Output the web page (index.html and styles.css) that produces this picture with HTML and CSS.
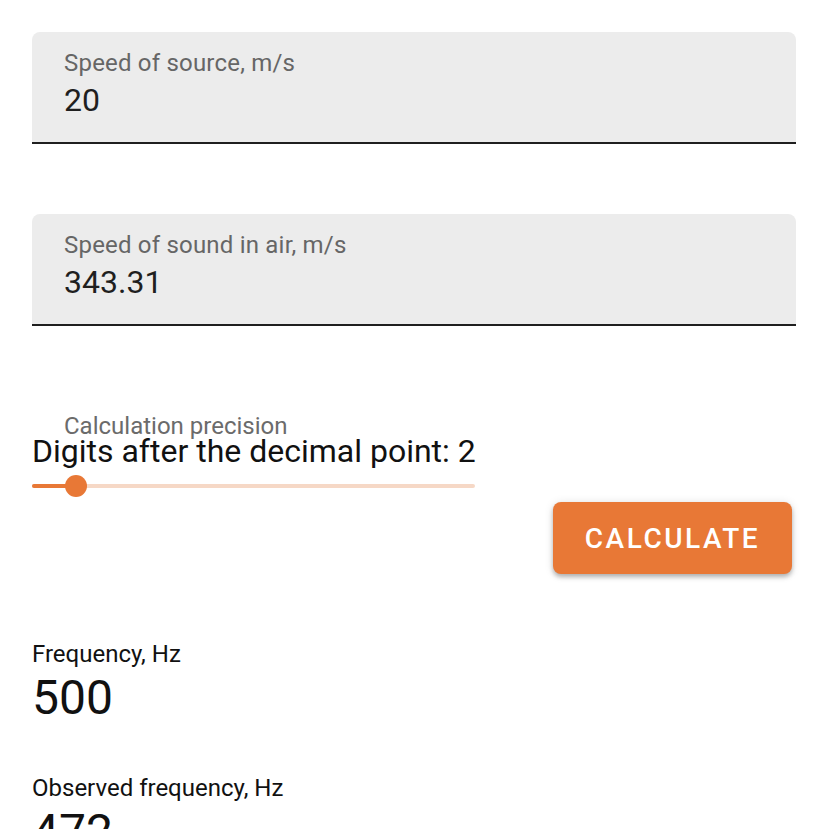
FILE: index.html
```html
<!DOCTYPE html>
<html>
<head>
<meta charset="utf-8">
<link rel="stylesheet" href="styles.css">
</head>
<body>
<div class="page">
  <div class="field">
    <div class="field-label">Speed of source, m/s</div>
    <div class="field-value">20</div>
  </div>
  <div class="field field-second">
    <div class="field-label">Speed of sound in air, m/s</div>
    <div class="field-value">343.31</div>
  </div>
  <div class="precision">
    <div class="precision-label">Calculation precision</div>
    <div class="precision-text">Digits after the decimal point: 2</div>
    <div class="slider">
      <div class="slider-track"></div>
      <div class="slider-active"></div>
      <div class="slider-thumb"></div>
    </div>
  </div>
  <div class="actions">
    <button class="btn">CALCULATE</button>
  </div>
  <div class="result result-first">
    <div class="result-label">Frequency, Hz</div>
    <div class="result-value">500</div>
  </div>
  <div class="result result-next">
    <div class="result-label">Observed frequency, Hz</div>
    <div class="result-value">472</div>
  </div>
</div>
</body>
</html>
```

FILE: styles.css
```css
html, body {
  margin: 0;
  padding: 0;
  background: #fff;
  font-family: Roboto, "Liberation Sans", sans-serif;
  overflow: hidden;
}
.page {
  padding: 32px 32px 0 32px;
  display: flex;
  flex-direction: column;
}
.field {
  height: 110px;
  background: #ececec;
  border-radius: 8px 8px 0 0;
  border-bottom: 2px solid #1f1f1f;
  padding: 0 32px;
  display: flex;
  flex-direction: column;
}
.field-second {
  margin-top: 70px;
}
.field-label {
  font-size: 24px;
  line-height: 28px;
  letter-spacing: 0.2px;
  color: #666;
  margin-top: 17px;
}
.field-value {
  font-size: 32px;
  line-height: 36px;
  color: #1f1f1f;
  margin-top: 5px;
}
.precision {
  margin-top: 86px;
  width: 443px;
  display: flex;
  flex-direction: column;
}
.precision-label {
  font-size: 24px;
  line-height: 26px;
  color: #6b6b6b;
  padding-left: 32px;
  margin-top: 1px;
  margin-bottom: -1px;
}
.precision-text {
  font-size: 32px;
  line-height: 32px;
  color: #111;
  margin-top: -3px;
  white-space: nowrap;
}
.slider {
  position: relative;
  height: 24px;
  margin-top: 7px;
}
.slider-track {
  position: absolute;
  left: 0;
  right: 0;
  top: 10px;
  height: 4px;
  border-radius: 2px;
  background: #f6d8c6;
}
.slider-active {
  position: absolute;
  left: 0;
  width: 44px;
  top: 10px;
  height: 4px;
  border-radius: 2px;
  background: #e87836;
}
.slider-thumb {
  position: absolute;
  left: 33px;
  top: 1px;
  width: 22px;
  height: 22px;
  border-radius: 50%;
  background: #e87836;
}
.actions {
  display: flex;
  justify-content: flex-end;
  padding-right: 4px;
  margin-top: 4px;
}
.btn {
  width: 239px;
  height: 72px;
  border: none;
  border-radius: 8px;
  background: #e87836;
  color: #fff;
  font-family: Roboto, "Liberation Sans", sans-serif;
  font-size: 28px;
  font-weight: 500;
  letter-spacing: 2.5px;
  box-shadow: 0 3px 4px rgba(0,0,0,0.25), 0 1px 10px rgba(0,0,0,0.12);
  padding: 0;
}
.result {
  display: flex;
  flex-direction: column;
}
.result-first {
  margin-top: 68px;
}
.result-next {
  margin-top: 50px;
}
.result-label {
  font-size: 24px;
  line-height: 24px;
  color: #111;
}
.result-value {
  font-size: 48px;
  line-height: 56px;
  color: #111;
  margin-top: 4px;
}
```
